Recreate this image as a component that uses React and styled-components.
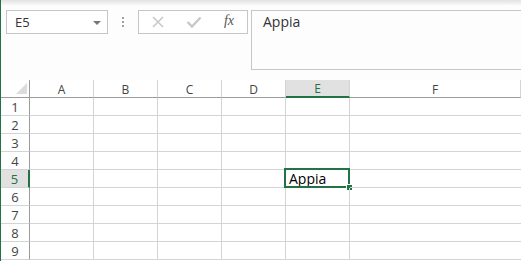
import React from 'react'
import styled, { createGlobalStyle } from 'styled-components'

const GREEN = '#217346'
const GRID = '#d4d4d4'
const HEAD_EDGE = '#9b9b9b'

const columns = [
  { name: 'A', width: 64 },
  { name: 'B', width: 64 },
  { name: 'C', width: 64 },
  { name: 'D', width: 64 },
  { name: 'E', width: 64 },
  { name: 'F', width: 171, last: true }
]
const rows = [1, 2, 3, 4, 5, 6, 7, 8, 9]
const active = { col: 'E', row: 5 }
const activeValue = 'Appia'

const App = () => {
  const template = `29px ${columns.map(c => c.width + 'px').join(' ')}`

  return (
    <>
      <GlobalStyle />
      <Window>
        <TopShade />
        <Toolbar>
          <NameBox>
            <span>{active.col}{active.row}</span>
            <DropArrow />
          </NameBox>
          <Grip>
            <i /><i /><i />
          </Grip>
          <FxButtons>
            <FxButton>
              <svg width='12' height='12' viewBox='0 0 12 12'>
                <path d='M1 1 L11 11 M11 1 L1 11' stroke='#c8c8c8' strokeWidth='1.6' fill='none' />
              </svg>
            </FxButton>
            <FxButton>
              <svg width='16' height='12' viewBox='0 0 16 12'>
                <path d='M1.5 6 L6 10.5 L14.5 1.5' stroke='#c8c8c8' strokeWidth='2.4' fill='none' />
              </svg>
            </FxButton>
            <FxButton>
              <FxLabel>fx</FxLabel>
            </FxButton>
          </FxButtons>
          <FormulaInput>{activeValue}</FormulaInput>
        </Toolbar>

        <Sheet style={{ gridTemplateColumns: template }}>
          <Corner><CornerMark /></Corner>
          {columns.map(c => (
            <ColHead key={c.name} $selected={c.name === active.col}>{c.name}</ColHead>
          ))}
          {rows.map(r => (
            <React.Fragment key={r}>
              <RowHead $selected={r === active.row}>{r}</RowHead>
              {columns.map(c => {
                const isActive = c.name === active.col && r === active.row
                return (
                  <Cell key={c.name} $last={c.last}>
                    {isActive && activeValue}
                    {isActive && <Selection><FillHandle /></Selection>}
                  </Cell>
                )
              })}
            </React.Fragment>
          ))}
        </Sheet>
      </Window>
    </>
  )
}

const GlobalStyle = createGlobalStyle`
  body {
    margin: 0;
    background: #fff;
    font-family: "Segoe UI", "Open Sans", "Noto Sans", sans-serif;
  }
`

const Window = styled.div`
  width: 521px;
  height: 261px;
  box-sizing: border-box;
  overflow: hidden;
  border-left: 1px solid ${GREEN};
  display: flex;
  flex-direction: column;
  background: #fff;
`

const TopShade = styled.div`
  height: 5px;
  flex: none;
  background: linear-gradient(#e2e2e2, #f8f8f8);
`

const Toolbar = styled.div`
  height: 75px;
  flex: none;
  box-sizing: border-box;
  padding: 5px 0 0 5px;
  display: flex;
  align-items: flex-start;
  background: #fdfdfd;
`

const NameBox = styled.div`
  width: 102px;
  height: 24px;
  box-sizing: border-box;
  border: 1px solid #c6c6c6;
  background: #fff;
  display: flex;
  align-items: center;
  justify-content: space-between;
  padding: 0 6px 1px 8px;
  font-size: 13px;
  color: #333;
`

const DropArrow = styled.span`
  width: 0;
  height: 0;
  border-left: 4px solid transparent;
  border-right: 4px solid transparent;
  border-top: 4px solid #777;
  margin-top: 2px;
`

const Grip = styled.div`
  width: 30px;
  height: 24px;
  display: flex;
  flex-direction: column;
  align-items: center;
  justify-content: center;
  gap: 2px;

  i {
    display: block;
    width: 2px;
    height: 2px;
    background: #a0a0a0;
  }
`

const FxButtons = styled.div`
  width: 110px;
  height: 24px;
  box-sizing: border-box;
  border: 1px solid #c6c6c6;
  background: #fff;
  display: grid;
  grid-template-columns: 37px 35px 1fr;
`

const FxButton = styled.div`
  display: flex;
  align-items: center;
  justify-content: center;
`

const FxLabel = styled.span`
  font-family: "Liberation Serif", "DejaVu Serif", serif;
  font-style: italic;
  font-size: 14px;
  color: #555;
  margin-top: -2px;
`

const FormulaInput = styled.div`
  flex: 1;
  height: 60px;
  margin-left: 3px;
  box-sizing: border-box;
  border: 1px solid #c6c6c6;
  border-right: none;
  background: #fdfdfd;
  padding: 1px 0 0 11px;
  font-size: 14px;
  color: #333;
`

const Sheet = styled.div`
  display: grid;
  grid-auto-rows: 18px;
  background: #fff;
`

const headBase = `
  box-sizing: border-box;
  display: flex;
  align-items: center;
  justify-content: center;
  font-size: 12px;
  color: #444;
`

const Corner = styled.div`
  ${headBase}
  position: relative;
  border-right: 1px solid ${HEAD_EDGE};
  border-bottom: 1px solid ${HEAD_EDGE};
`

const CornerMark = styled.span`
  position: absolute;
  right: 2px;
  bottom: 3px;
  width: 0;
  height: 0;
  border-left: 11px solid transparent;
  border-bottom: 11px solid #dcdcdc;
`

const ColHead = styled.div`
  ${headBase}
  padding-top: 1px;
  border-right: 1px solid ${GRID};
  border-bottom: ${p => p.$selected ? `2px solid ${GREEN}` : `1px solid ${HEAD_EDGE}`};
  background: ${p => p.$selected ? '#e1e1e1' : '#fff'};
  color: ${p => p.$selected ? GREEN : '#444'};
`

const RowHead = styled.div`
  ${headBase}
  border-bottom: 1px solid ${GRID};
  border-right: ${p => p.$selected ? `2px solid ${GREEN}` : `1px solid ${HEAD_EDGE}`};
  background: ${p => p.$selected ? '#e1e1e1' : '#fff'};
  color: ${p => p.$selected ? GREEN : '#444'};
  font-size: 13px;
`

const Cell = styled.div`
  position: relative;
  box-sizing: border-box;
  border-bottom: 1px solid ${GRID};
  border-right: ${p => p.$last ? 'none' : `1px solid ${GRID}`};
  padding: 0 0 0 3px;
  font-size: 14px;
  line-height: 17px;
  color: #000;
`

const Selection = styled.div`
  position: absolute;
  top: -2px;
  left: -2px;
  right: -1px;
  bottom: -1px;
  border: 2px solid ${GREEN};
  pointer-events: none;
`

const FillHandle = styled.span`
  position: absolute;
  right: -5px;
  bottom: -5px;
  width: 5px;
  height: 5px;
  background: ${GREEN};
  border: 1px solid #fff;
`

export default App
